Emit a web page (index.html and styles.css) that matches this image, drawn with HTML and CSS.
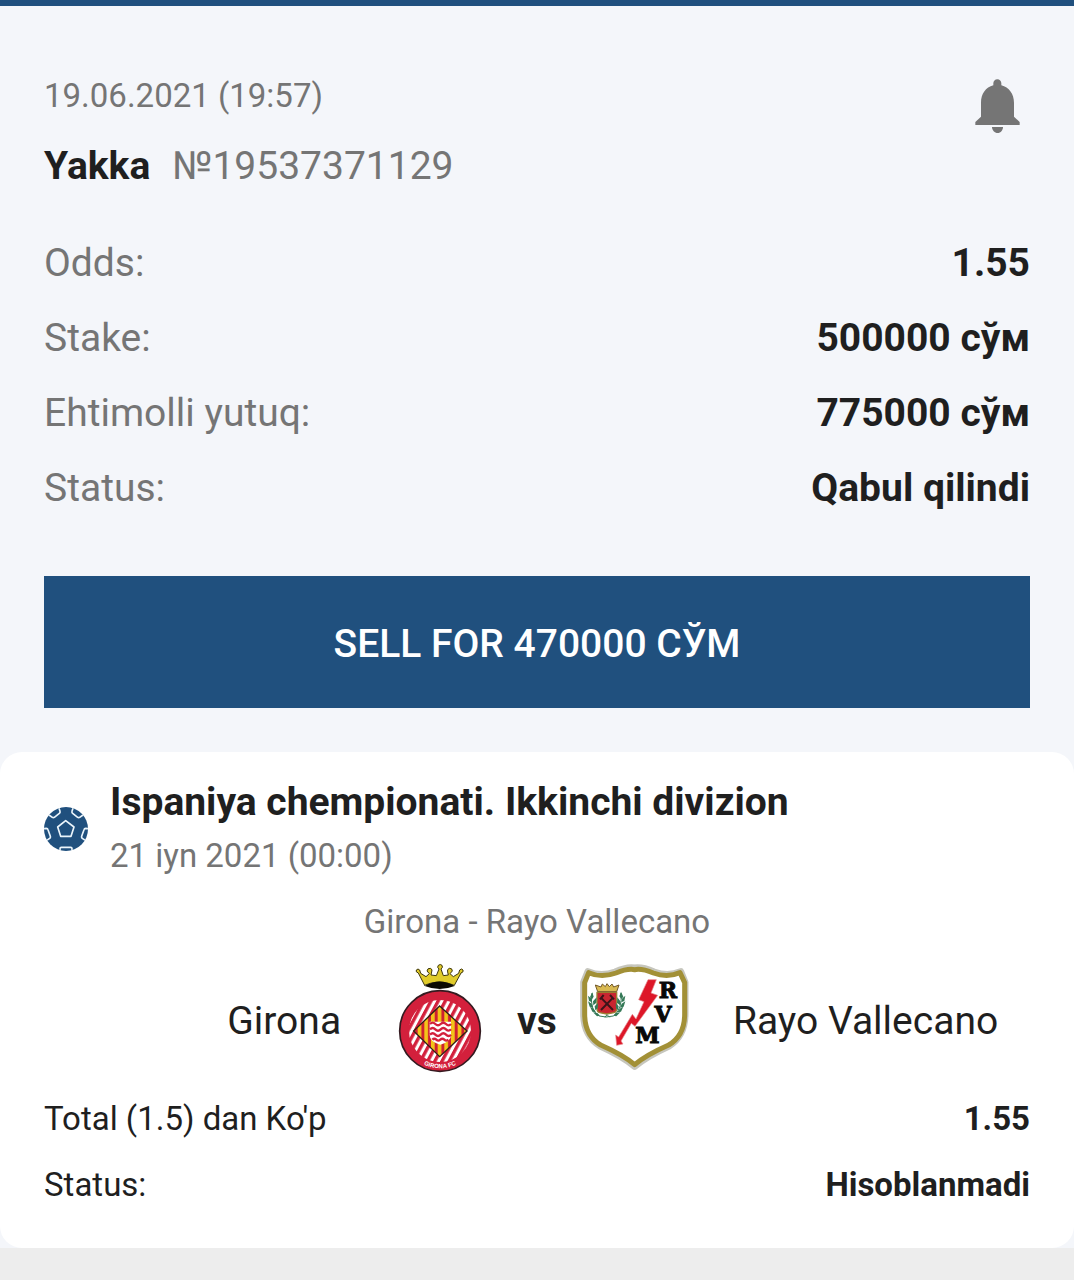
FILE: index.html
```
<!DOCTYPE html>
<html lang="uz">
<head>
    <meta charset="UTF-8">
    <meta name="viewport" content="width=device-width, initial-scale=1.0">
    <title>Yakka №19537371129</title>
    <link rel="stylesheet" href="styles.css">
</head>
<body>
    <main>
        <section class="bet">
            <header class="bet-header">
                <div>
                    <p class="date">19.06.2021 (19:57)</p>
                    <h1><strong>Yakka</strong><span class="bet-number">№19537371129</span></h1>
                </div>
                <button type="button" class="bell" aria-label="Notifications">
                    <svg viewBox="12 21 198 198">
                        <path fill="#757575" d="M112 40c-7 0-12 5-12 12v6c-23 6-37 26-37 52v42L46 168v9h133v-9l-17-16v-42c0-26-15-46-38-52v-6c0-7-5-12-12-12z"/>
                        <path fill="#757575" d="M96 183h33c0 10-7 18-16 18s-17-8-17-18z"/>
                    </svg>
                </button>
            </header>

            <dl class="details">
                <div class="row"><dt>Odds:</dt><dd>1.55</dd></div>
                <div class="row"><dt>Stake:</dt><dd>500000 сўм</dd></div>
                <div class="row"><dt>Ehtimolli yutuq:</dt><dd>775000 сўм</dd></div>
                <div class="row"><dt>Status:</dt><dd>Qabul qilindi</dd></div>
            </dl>

            <button type="button" class="sell">SELL FOR 470000 СЎМ</button>
        </section>

        <article class="event">
            <header class="event-header">
                <svg class="ball" viewBox="42 33 132 132">
                    <defs>
                        <clipPath id="ballClip"><circle cx="108" cy="99" r="66"/></clipPath>
                    </defs>
                    <circle cx="108" cy="99" r="66" fill="#20507e"/>
                    <g clip-path="url(#ballClip)" fill="none" stroke="#eaf4fb" stroke-width="5" stroke-linejoin="round">
                        <path d="M107 74l25 19-9 28H92l-9-28z"/>
                        <path d="M57 57l10 7q3 2 6 0l15-12q3-2 2-6l-4-12"/>
                        <path d="M159 57l-10 7q-3 2-6 0l-15-12q-3-2-2-6l4-12"/>
                        <path d="M40 98l9-1q4 0 5 4l7 20q1 4-2 6l-10 7"/>
                        <path d="M176 98l-9-1q-4 0-5 4l-7 20q-1 4 2 6l10 7"/>
                        <path d="M90 168v-10q0-4 4-4h28q4 0 4 4v10"/>
                    </g>
                </svg>
                <div>
                    <h2>Ispaniya chempionati. Ikkinchi divizion</h2>
                    <p class="date">21 iyn 2021 (00:00)</p>
                </div>
            </header>

            <p class="match">Girona - Rayo Vallecano</p>

            <div class="teams">
                <div class="team home">
                    <span class="team-name">Girona</span>
                    <svg class="crest" viewBox="-12 24 330 330" role="img" aria-label="Girona FC">
                        <defs>
                            <pattern id="redStripes" width="19" height="19" patternUnits="userSpaceOnUse" patternTransform="rotate(28)">
                                <rect width="19" height="19" fill="#fff"/>
                                <rect width="10" height="19" fill="#d3203c"/>
                            </pattern>
                            <pattern id="yellowStripes" x="146" width="20" height="20" patternUnits="userSpaceOnUse">
                                <rect width="20" height="20" fill="#cf2030"/>
                                <rect width="11" height="20" fill="#f3c419"/>
                            </pattern>
                            <path id="nameArc" d="M78 311A112 112 0 0 0 228 311"/>
                        </defs>
                        <path fill="#e0cb2c" stroke="#3c350b" stroke-width="3" stroke-linejoin="round" d="M107 91L88 54q-9-3-6-9 5-6 10 0l3 10 16 10 10-9-7-8q1-9 10-8 8 3 4 11l-2 9 16 2 8-20q-7-5-2-11 6-5 11 0 4 6-3 11l7 20 15-2-2-9q-3-8 5-11 9-1 9 8l-7 8 10 9 16-10 3-10q6-6 10 0 3 6-6 9l-20 37q-45-20-90 0z"/>
                        <path fill="#0b0a03" d="M107 93q45-27 90 0-45 18-90 0z"/>
                        <circle cx="153" cy="228" r="121" fill="#d3203c" stroke="#341a20" stroke-width="5"/>
                        <circle cx="153" cy="228" r="93" fill="url(#redStripes)"/>
                        <path fill="url(#yellowStripes)" stroke="#2e2015" stroke-width="4" d="M152 153l82 75-82 77-78-77z"/>
                        <path fill="#fff" d="M122 200h64v40q0 20-32 29-32-9-32-29z"/>
                        <path fill="none" stroke="#d3203c" stroke-width="7" d="M123 207q8-8 16 0t16 0 16 0 15 0M123 223q8-8 16 0t16 0 16 0 15 0M123 239q8-8 16 0t16 0 16 0 15 0M130 254q6-6 12 0t12 0 12 0 12 0"/>
                        <text class="crest-name"><textPath href="#nameArc" startOffset="50%">GIRONA FC</textPath></text>
                    </svg>
                </div>
                <strong class="team-name">vs</strong>
                <div class="team away">
                    <svg class="crest" viewBox="27 24 330 330" role="img" aria-label="Rayo Vallecano">
                        <path fill="#fff" stroke="#c6c6bd" stroke-width="21" stroke-linejoin="round" d="M54 50q38 17 82 1 34-16 58-12 24-3 58 12 42 15 80-1l13 32v95q0 65-48 96-70 32-103 61-33-29-103-61-50-31-50-96V82z"/>
                        <path fill="#fff" stroke="#a29036" stroke-width="15" stroke-linejoin="round" d="M56 53q38 17 82 1 34-14 56-10 22-4 56 10 42 15 80-1l14 30v94q0 65-48 93-68 30-102 59-34-29-102-59-48-28-48-93V83z"/>
                        <path fill="#dd1728" stroke="#e6878b" stroke-width="2" d="M234 74h25l-16 40 20 7-68 93-11-9-31 53 6 9-19 4-3-31 9 6 41-68 11 14 24-52-16-6z"/>
                        <path fill="#c92630" stroke="#9d8134" stroke-width="4" d="M81 112h59v50q0 9-8 11l-22 4-21-4q-8-2-8-11z"/>
                        <path fill="#d8b951" stroke="#725828" stroke-width="3" d="M83 110l-7-20 17 6 4-9 9 8 5-9 7 9 8-8 5 9 16-6-7 20z"/>
                        <path fill="none" stroke="#3c1419" stroke-width="6" d="M92 127l37 38M130 127l-37 38M90 133l11-13M132 133l-12-13"/>
                        <path fill="none" stroke="#357957" stroke-width="3" d="M66 114q-8 53 22 69 20 6 42 0 28-20 23-69M105 187l6-8 8 8"/>
                        <g fill="#357957">
                            <path d="M67 112l-7 14 6 7 5-8zM63 130l-9-8 3 16 9 4zM65 146l-11-7 5 16 11 3zM71 161l-11-6 7 15 11 2zM69 139l11-12-1 16-9 8zM74 154l10-10-1 16-7 6zM82 174l-13-2 12 12 9-2z"/>
                            <path d="M153 110l7 15-6 7-6-8zM157 130l9-8-3 16-9 4zM155 146l11-7-5 16-11 3zM149 161l11-6-7 15-11 2zM151 139l-9-12-1 16 9 8zM146 154l-9-10 1 16 6 6zM138 174l13-2-12 12-9-2z"/>
                        </g>
                        <g class="crest-letters">
                            <text x="294" y="130">R</text>
                            <text x="279" y="200">V</text>
                            <text x="232" y="265">M</text>
                        </g>
                    </svg>
                    <span class="team-name">Rayo Vallecano</span>
                </div>
            </div>

            <dl class="outcome">
                <div class="row"><dt>Total (1.5) dan Ko'p</dt><dd>1.55</dd></div>
                <div class="row"><dt>Status:</dt><dd>Hisoblanmadi</dd></div>
            </dl>
        </article>
    </main>
</body>
</html>
```

FILE: styles.css
```
:root {
    --primary-color: #20507e;
    --text-color: #1f1f1f;
    --light-text: #757575;
    --background-color: #f4f6fa;
    --card-background: #ffffff;
    --page-background: #ededed;
}

* {
    margin: 0;
    padding: 0;
    box-sizing: border-box;
}

body {
    font-family: Roboto, sans-serif;
    font-size: 39px;
    line-height: 45px;
    color: var(--text-color);
    background-color: var(--page-background);
}

main {
    background-color: var(--background-color);
    border-top: 6px solid var(--primary-color);
}

.bet {
    padding: 67px 44px 44px;
}

.bet-header {
    display: flex;
    justify-content: space-between;
    align-items: flex-start;
}

.date {
    font-size: 33px;
    color: var(--light-text);
}

h1 {
    display: flex;
    gap: 22px;
    margin-top: 26px;
    font-size: 39px;
    font-weight: 400;
}

.bet-number {
    color: var(--light-text);
}

strong,
dd {
    font-weight: 700;
}

.bell {
    width: 66px;
    height: 66px;
    background: none;
    border: none;
    cursor: pointer;
}

svg {
    display: block;
    flex-shrink: 0;
}

.details {
    display: flex;
    flex-direction: column;
    gap: 30px;
    margin: 52px 0 65px;
}

.row {
    display: flex;
    justify-content: space-between;
}

.details dt {
    color: var(--light-text);
}

.sell {
    display: block;
    width: 100%;
    height: 132px;
    padding-top: 4px;
    background-color: var(--primary-color);
    color: white;
    border: none;
    font-family: inherit;
    font-size: 39px;
    font-weight: 500;
    cursor: pointer;
}

.event {
    padding: 28px 44px 41px;
    background-color: var(--card-background);
    border-radius: 22px;
}

.event-header {
    display: flex;
    align-items: center;
    gap: 22px;
}

.ball {
    width: 44px;
    height: 44px;
}

h2 {
    margin-bottom: 8px;
    font-size: 39px;
    font-weight: 700;
}

.match {
    margin-top: 21px;
    font-size: 33px;
    text-align: center;
    color: var(--light-text);
}

.teams {
    display: grid;
    grid-template-columns: 1fr auto 1fr;
    align-items: center;
    gap: 22px;
    margin-top: 19px;
}

.team {
    display: flex;
    align-items: center;
    gap: 44px;
}

.team-name {
    padding-top: 6px;
}

.home {
    justify-content: flex-end;
}

.crest {
    width: 110px;
    height: 110px;
}

.crest-name {
    font-family: "Liberation Sans", sans-serif;
    font-size: 18px;
    font-weight: 700;
    fill: #fff;
    text-anchor: middle;
}

.crest-letters {
    font-family: "DejaVu Serif", serif;
    font-size: 66px;
    font-weight: 700;
    text-anchor: middle;
    fill: #080808;
    stroke: #080808;
    stroke-width: 3px;
}

.outcome {
    display: flex;
    flex-direction: column;
    gap: 21px;
    margin-top: 23px;
    font-size: 33px;
}
```
